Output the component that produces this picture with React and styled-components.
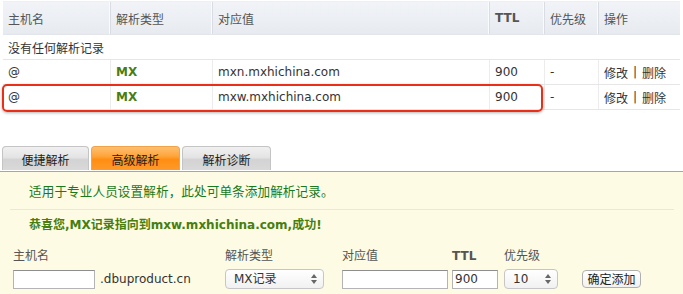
import React from "react";
import styled, { createGlobalStyle } from "styled-components";

const Global = createGlobalStyle`
  html, body { margin: 0; padding: 0; background: #fff; }
  body {
    font-family: "DejaVu Sans", "Noto Sans CJK SC", sans-serif;
    font-size: 12px;
    color: #333;
    width: 683px;
    height: 294px;
    overflow: hidden;
  }
`;

const Page = styled.div`
  display: flex;
  flex-direction: column;
  width: 683px;
  height: 294px;
`;

const cols = "108px 102px 277px 55px 54px 81px";

const Table = styled.div`
  position: relative;
  margin: 1px 0 0 3px;
  width: 677px;
  border-top: 1px solid #eef0f3;
`;

const HeadRow = styled.div`
  display: grid;
  grid-template-columns: ${cols};
  height: 32px;
  background: linear-gradient(#f1f3f7, #e7ebf0);
  border-bottom: 1px solid #e2e5e9;
`;

const HeadCell = styled.div`
  display: flex;
  align-items: center;
  padding-left: 5px;
  color: #555;
  font-weight: ${(p) => (p.$bold ? "bold" : "normal")};
  border-right: ${(p) => (p.$last ? "none" : "1px solid #d9dde3")};
  box-shadow: ${(p) => (p.$last ? "none" : "inset -1px 0 0 #fafbfc")};
`;

const EmptyRow = styled.div`
  height: 24px;
  display: flex;
  align-items: center;
  padding-left: 5px;
  border-bottom: 1px solid #e6e6e6;
`;

const Row = styled.div`
  display: grid;
  grid-template-columns: ${cols};
  height: 24px;
  border-bottom: 1px solid #e6e6e6;
`;

const Cell = styled.div`
  display: flex;
  align-items: center;
  padding-left: 5px;
  border-right: ${(p) => (p.$last ? "none" : "1px solid #ececec")};
  color: ${(p) => (p.$mx ? "#4a7d10" : "#333")};
  font-weight: ${(p) => (p.$mx ? "bold" : "normal")};
  white-space: nowrap;
`;

const Highlight = styled.div`
  position: absolute;
  left: -1px;
  top: 82px;
  width: 537px;
  height: 24px;
  border: 2px solid #ea2f18;
  border-radius: 5px;
  box-shadow: 0 1px 3px rgba(0, 0, 0, 0.3);
  pointer-events: none;
`;

const Sep = styled.span`
  margin: 0 5px;
`;

const Tabs = styled.div`
  display: flex;
  gap: 2px;
  margin: 36px 0 0 2px;
  height: 24px;
`;

const Tab = styled.div`
  box-sizing: border-box;
  width: ${(p) => p.$w}px;
  height: 24px;
  display: flex;
  align-items: center;
  justify-content: center;
  padding-top: 2px;
  font-size: 12px;
  color: #222;
  border: 1px solid ${(p) => (p.$active ? "#f3a24a" : "#c4c4c4")};
  border-bottom: none;
  border-radius: 4px 4px 0 0;
  background: ${(p) =>
    p.$active
      ? "linear-gradient(#ffbf70 0%, #ffa43a 40%, #ff8d12 55%, #ff9a2a 100%)"
      : "linear-gradient(#f0f0f0 0%, #e4e4e4 45%, #d3d3d3 55%, #d9d9d9 100%)"};
`;

const Panel = styled.div`
  flex: 1;
  border-top: 1px solid #ff9900;
  margin-top: 1px;
  background: #fdfbe3;
  display: flex;
  flex-direction: column;
`;

const Intro = styled.div`
  margin: 10px 0 0 29px;
  height: 20px;
  line-height: 20px;
  font-size: 12.6px;
  color: #197a1d;
  letter-spacing: 0.1px;
`;

const Divider = styled.div`
  margin: 7px 9px 0 10px;
  height: 1px;
  background: #ebe9d4;
`;

const Success = styled.div`
  margin: 5px 0 0 29px;
  height: 20px;
  line-height: 20px;
  font-size: 12px;
  font-weight: bold;
  color: #487e10;
`;

const Form = styled.div`
  display: grid;
  grid-template-columns: 212px 117px 110px 52px 78px auto;
  grid-template-rows: 16px 20px;
  row-gap: 5px;
  margin: 13px 0 0 13px;
`;

const Label = styled.div`
  color: #555;
  line-height: 16px;
  font-weight: ${(p) => (p.$bold ? "bold" : "normal")};
`;

const Control = styled.div`
  display: flex;
  align-items: center;
`;

const TextInput = styled.input`
  box-sizing: border-box;
  width: ${(p) => p.$w}px;
  height: 19px;
  margin: 0;
  padding: 0 2px;
  border: 1px solid #b4b4b4;
  border-top-color: #8e8e8e;
  background: #fff;
  font-family: "DejaVu Sans", sans-serif;
  font-size: 12px;
  color: #333;
  outline: none;
`;

const Suffix = styled.span`
  margin-left: 5px;
  color: #333;
`;

const SelectBox = styled.div`
  position: relative;
  width: ${(p) => p.$w}px;
  height: 20px;
`;

const Select = styled.select`
  appearance: none;
  box-sizing: border-box;
  width: 100%;
  height: 20px;
  margin: 0;
  padding: 0 0 0 ${(p) => p.$pl}px;
  border: 1px solid #c6c6c6;
  border-radius: 4px;
  background: linear-gradient(#ffffff, #f1f1f1);
  font-family: "DejaVu Sans", "Noto Sans CJK SC", sans-serif;
  font-size: 12px;
  color: #333;
  outline: none;
`;

const Arrows = styled.svg`
  position: absolute;
  right: 7px;
  top: 5px;
  pointer-events: none;
`;

const Button = styled.button`
  box-sizing: border-box;
  width: 59px;
  height: 18px;
  margin: 0 0 0 0;
  padding: 0;
  border: 1px solid #b0b0b0;
  border-radius: 4px;
  background: linear-gradient(#ffffff, #f2f2f2);
  font-family: "Noto Sans CJK SC", sans-serif;
  font-size: 12px;
  line-height: 16px;
  color: #222;
`;

const records = [
  { host: "@", type: "MX", value: "mxn.mxhichina.com", ttl: "900", pri: "-" },
  { host: "@", type: "MX", value: "mxw.mxhichina.com", ttl: "900", pri: "-" },
];

const UpDown = () => (
  <Arrows width="6" height="10" viewBox="0 0 6 10">
    <path d="M3 0 L6 4 L0 4 Z" fill="#666" />
    <path d="M3 10 L6 6 L0 6 Z" fill="#666" />
  </Arrows>
);

export default function App() {
  return (
    <Page>
      <Global />
      <Table>
        <HeadRow>
          <HeadCell>主机名</HeadCell>
          <HeadCell>解析类型</HeadCell>
          <HeadCell>对应值</HeadCell>
          <HeadCell $bold>TTL</HeadCell>
          <HeadCell>优先级</HeadCell>
          <HeadCell $last>操作</HeadCell>
        </HeadRow>
        <EmptyRow>没有任何解析记录</EmptyRow>
        {records.map((r, i) => (
          <Row key={i}>
            <Cell>{r.host}</Cell>
            <Cell $mx>{r.type}</Cell>
            <Cell>{r.value}</Cell>
            <Cell>{r.ttl}</Cell>
            <Cell>{r.pri}</Cell>
            <Cell $last>
              修改<Sep>|</Sep>删除
            </Cell>
          </Row>
        ))}
        <Highlight />
      </Table>

      <Tabs>
        <Tab $w={87}>便捷解析</Tab>
        <Tab $w={89} $active>高级解析</Tab>
        <Tab $w={89}>解析诊断</Tab>
      </Tabs>

      <Panel>
        <Intro>适用于专业人员设置解析，此处可单条添加解析记录。</Intro>
        <Divider />
        <Success>恭喜您,MX记录指向到mxw.mxhichina.com,成功!</Success>
        <Form>
          <Label>主机名</Label>
          <Label>解析类型</Label>
          <Label>对应值</Label>
          <Label $bold>TTL</Label>
          <Label>优先级</Label>
          <Label />
          <Control>
            <TextInput $w={82} defaultValue="" />
            <Suffix>.dbuproduct.cn</Suffix>
          </Control>
          <Control>
            <SelectBox $w={99}>
              <Select $pl={8} defaultValue="MX">
                <option value="MX">MX记录</option>
              </Select>
              <UpDown />
            </SelectBox>
          </Control>
          <Control>
            <TextInput $w={106} defaultValue="" />
          </Control>
          <Control>
            <TextInput $w={46} defaultValue="900" />
          </Control>
          <Control>
            <SelectBox $w={54}>
              <Select $pl={8} defaultValue="10">
                <option value="10">10</option>
              </Select>
              <UpDown />
            </SelectBox>
          </Control>
          <Control>
            <Button>确定添加</Button>
          </Control>
        </Form>
      </Panel>
    </Page>
  );
}
